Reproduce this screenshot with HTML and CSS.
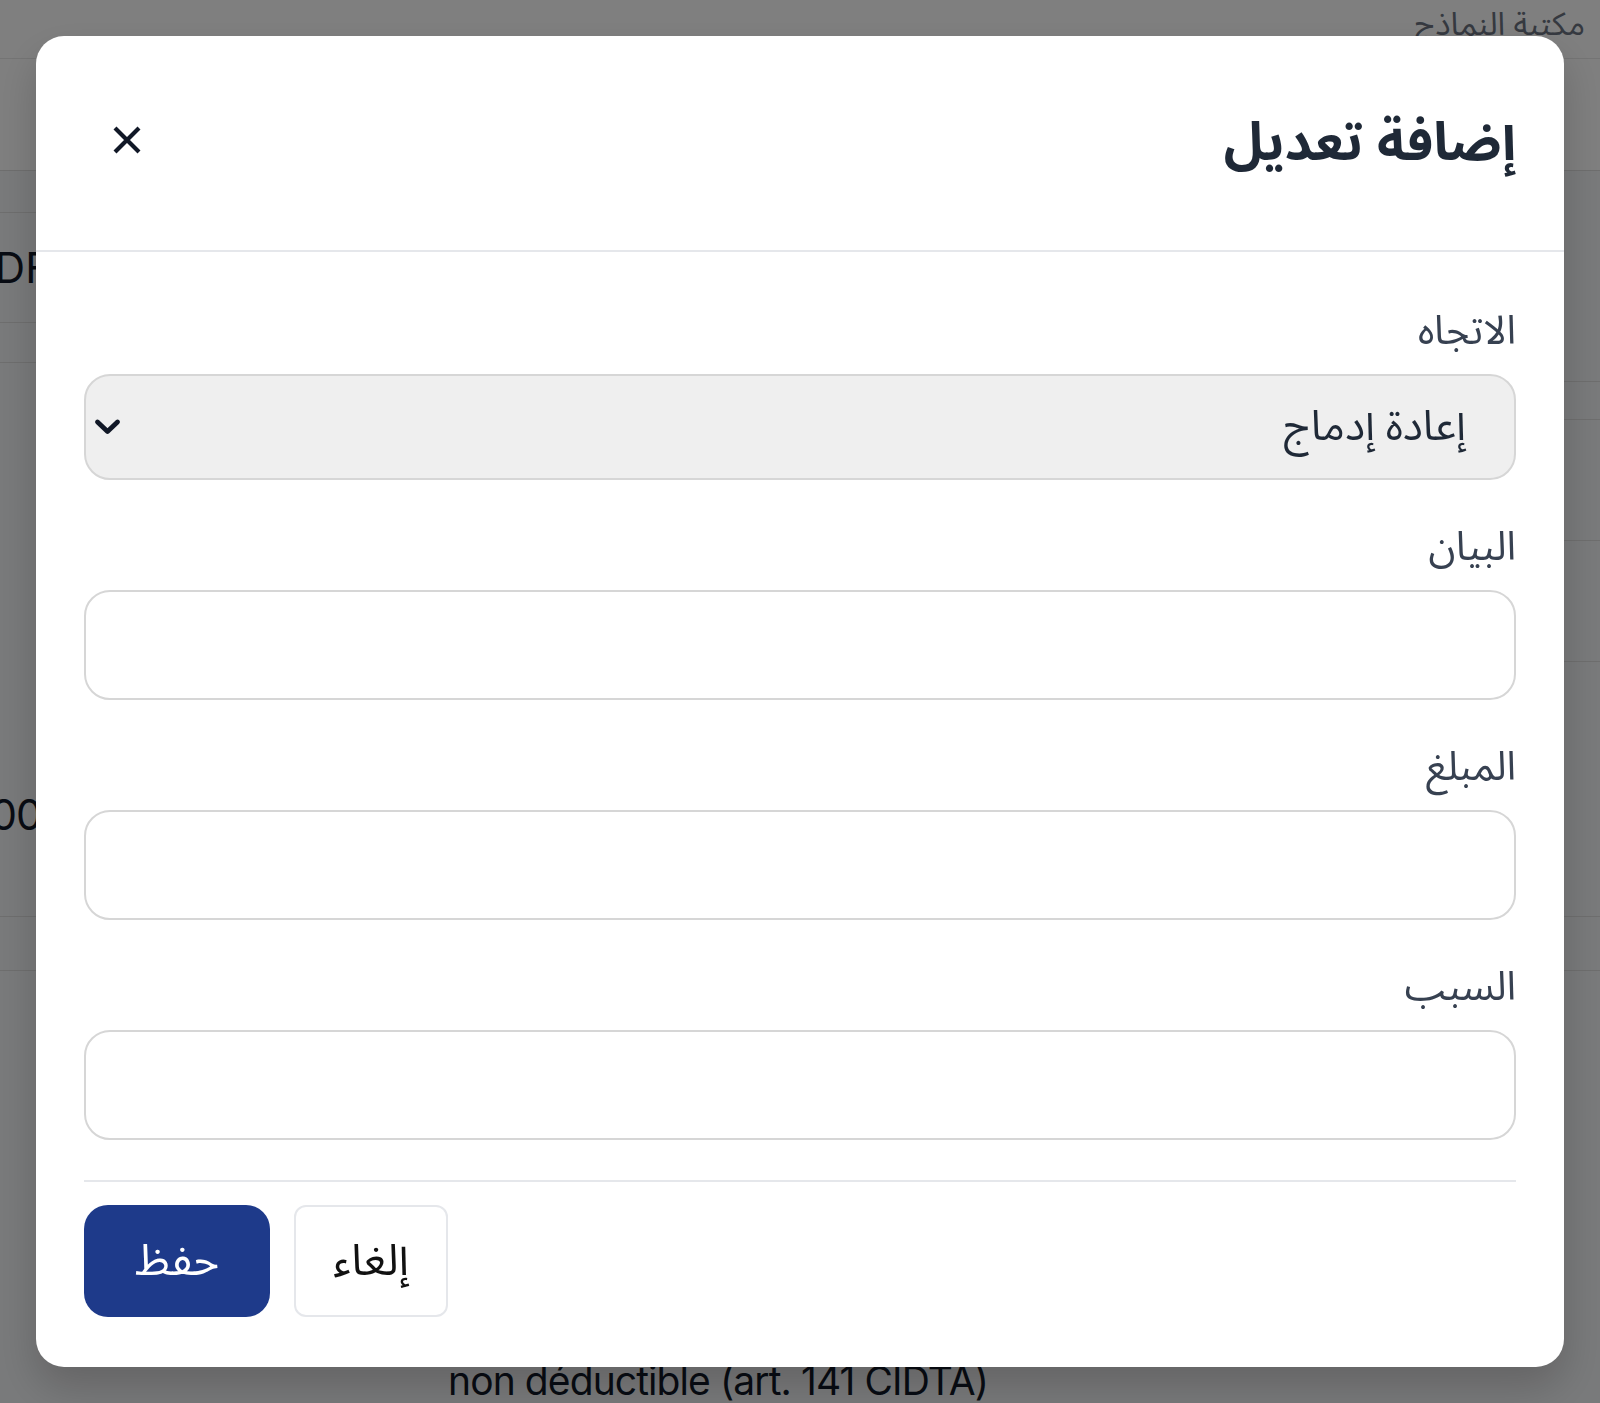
FILE: index.html
```html
<!DOCTYPE html>
<html lang="ar" dir="rtl">
<head>
<meta charset="utf-8">
<title>إضافة تعديل</title>
<link rel="stylesheet" href="styles.css">
</head>
<body>
<div class="page">
  <header class="topbar">
    <div class="topbar-row">
      <span class="lib-title">مكتبة النماذج</span>
    </div>
    <div class="topbar-sub"></div>
  </header>
  <div class="columns">
    <div class="col col-right">
      <div class="row r1"></div>
      <div class="row r2"></div>
      <div class="row r3"></div>
      <div class="row r4"></div>
      <div class="row r5"></div>
      <div class="row r6"></div>
    </div>
    <div class="col col-mid"></div>
    <div class="col col-left">
      <div class="row l1"></div>
      <div class="row l2"><span class="cut-text">PDF</span></div>
      <div class="row l3"></div>
      <div class="row l4"><span class="cut-text num">1 000</span></div>
      <div class="row l5"></div>
    </div>
  </div>
  <div class="bottom-row"><span class="note">non déductible (art. 141 CIDTA)</span></div>
</div>

<div class="overlay">
  <div class="modal" role="dialog" aria-labelledby="modal-title">
    <div class="modal-header">
      <h2 id="modal-title" class="modal-title">إضافة تعديل</h2>
      <button class="close-btn" type="button" aria-label="إغلاق">
        <svg width="28" height="28" viewBox="0 0 28 28" fill="none" stroke="#111827" stroke-width="4.2" stroke-linecap="butt"><path d="M2 2 L26 26 M26 2 L2 26"/></svg>
      </button>
    </div>
    <div class="modal-body">
      <div class="field">
        <label class="field-label">الاتجاه</label>
        <div class="select-box">
          <span class="select-value">إعادة إدماج</span>
          <svg class="chevron" width="27" height="18" viewBox="0 0 27 18" fill="none" stroke="#111827" stroke-width="4.8" stroke-linecap="round" stroke-linejoin="round"><path d="M3.5 4 L13.5 13.5 L23.5 4"/></svg>
        </div>
      </div>
      <div class="field">
        <label class="field-label">البيان</label>
        <div class="text-input"></div>
      </div>
      <div class="field">
        <label class="field-label">المبلغ</label>
        <div class="text-input"></div>
      </div>
      <div class="field">
        <label class="field-label">السبب</label>
        <div class="text-input"></div>
      </div>
      <div class="modal-footer">
        <button class="btn btn-cancel" type="button">إلغاء</button>
        <button class="btn btn-save" type="button">حفظ</button>
      </div>
    </div>
  </div>
</div>
</body>
</html>
```
FILE: styles.css
```css
* { box-sizing: border-box; }

html, body {
  margin: 0;
  padding: 0;
  width: 1600px;
  height: 1403px;
  overflow: hidden;
}

body {
  background: #f3f4f6;
  font-family: "Noto Sans Arabic", "Noto Kufi Arabic", "DejaVu Sans", sans-serif;
  color: #1f2937;
}

/* ---------- background page ---------- */
.page {
  width: 1600px;
  height: 1403px;
  display: flex;
  flex-direction: column;
}

.topbar {
  background: #ffffff;
  height: 172px;
  border-bottom: 1px solid #dddddd;
  display: flex;
  flex-direction: column;
}

.topbar-row {
  height: 59px;
  border-bottom: 1px solid #e8e8e8;
  display: flex;
  align-items: flex-start;
  padding: 4px 15px 0 0;
}

.lib-title {
  font-size: 32px;
  line-height: 42px;
  color: #6b7280;
}

.topbar-sub { flex: 1; }

.columns {
  height: 1195px;
  display: flex;
}

.col {
  display: flex;
  flex-direction: column;
}

.col-right { width: 300px; }
.col-mid { flex: 1; }
.col-left { width: 300px; }

.row {
  border-bottom: 1px solid #dddddd;
  display: flex;
  align-items: center;
  overflow: hidden;
}

.r1 { height: 211px; }
.r2 { height: 38px; }
.r3 { height: 121px; }
.r4 { height: 121px; }
.r5 { height: 255px; }
.r6 { height: 54px; }

.l1 { height: 42px; }
.l2 { height: 110px; }
.l3 { height: 40px; }
.l4 { height: 554px; align-items: flex-end; padding-bottom: 76px; }
.l5 { height: 54px; }

.cut-text {
  direction: ltr;
  font-family: Inter, "Liberation Sans", sans-serif;
  font-size: 42px;
  line-height: 50px;
  color: #111827;
  white-space: nowrap;
  margin-right: auto;
  margin-left: -32px;
}

.cut-text.num { margin-left: -62px; letter-spacing: -1px; }

.bottom-row {
  direction: ltr;
  display: flex;
  padding-left: 448px;
}

.note {
  font-family: Inter, "Liberation Sans", sans-serif;
  font-size: 39px;
  line-height: 44px;
  letter-spacing: -0.9px;
  color: #111827;
  white-space: nowrap;
}

/* ---------- overlay & modal ---------- */
.overlay {
  position: fixed;
  inset: 0;
  background: rgba(0, 0, 0, 0.5);
  padding: 36px;
  display: flex;
  align-items: flex-start;
}

.modal {
  width: 100%;
  background: #ffffff;
  border-radius: 28px;
  box-shadow: 0 20px 40px rgba(0, 0, 0, 0.18);
  overflow: hidden;
}

.modal-header {
  height: 216px;
  border-bottom: 2px solid #e5e7eb;
  display: flex;
  align-items: center;
  justify-content: space-between;
  padding: 0 48px 0 63px;
}

.modal-title {
  margin: 0;
  font-size: 53px;
  line-height: 64px;
  font-weight: 700;
  color: #1f2937;
}

.close-btn {
  width: 56px;
  height: 56px;
  border: 0;
  background: transparent;
  padding: 0;
  display: flex;
  align-items: center;
  justify-content: center;
  margin-bottom: 6px;
  cursor: pointer;
}

.modal-body {
  padding: 56px 48px 50px 48px;
  display: flex;
  flex-direction: column;
  gap: 44px;
}

.field {
  display: flex;
  flex-direction: column;
  gap: 18px;
}

.field-label {
  font-size: 40px;
  line-height: 48px;
  color: #374151;
}

.select-box {
  height: 106px;
  background: #efefef;
  border: 2px solid #d6d6d6;
  border-radius: 26px;
  display: flex;
  align-items: center;
  justify-content: space-between;
  padding: 0 48px 0 8px;
}

.select-value {
  font-size: 42px;
  line-height: 52px;
  color: #1f2937;
}

.chevron { margin-top: 0; }

.text-input {
  height: 110px;
  background: #ffffff;
  border: 2px solid #d6d6d6;
  border-radius: 26px;
}

.modal-footer {
  margin-top: -4px;
  border-top: 2px solid #e5e7eb;
  padding-top: 23px;
  display: flex;
  justify-content: flex-end;
  gap: 24px;
}

.btn {
  height: 112px;
  font-family: inherit;
  font-size: 44px;
  line-height: 52px;
  cursor: pointer;
  display: flex;
  align-items: center;
  justify-content: center;
}

.btn-cancel {
  width: 154px;
  background: #ffffff;
  color: #111111;
  border: 2px solid #e5e7eb;
  border-radius: 12px;
}

.btn-save {
  width: 186px;
  background: #1e3a8a;
  color: #ffffff;
  border: 0;
  border-radius: 24px;
}
```
